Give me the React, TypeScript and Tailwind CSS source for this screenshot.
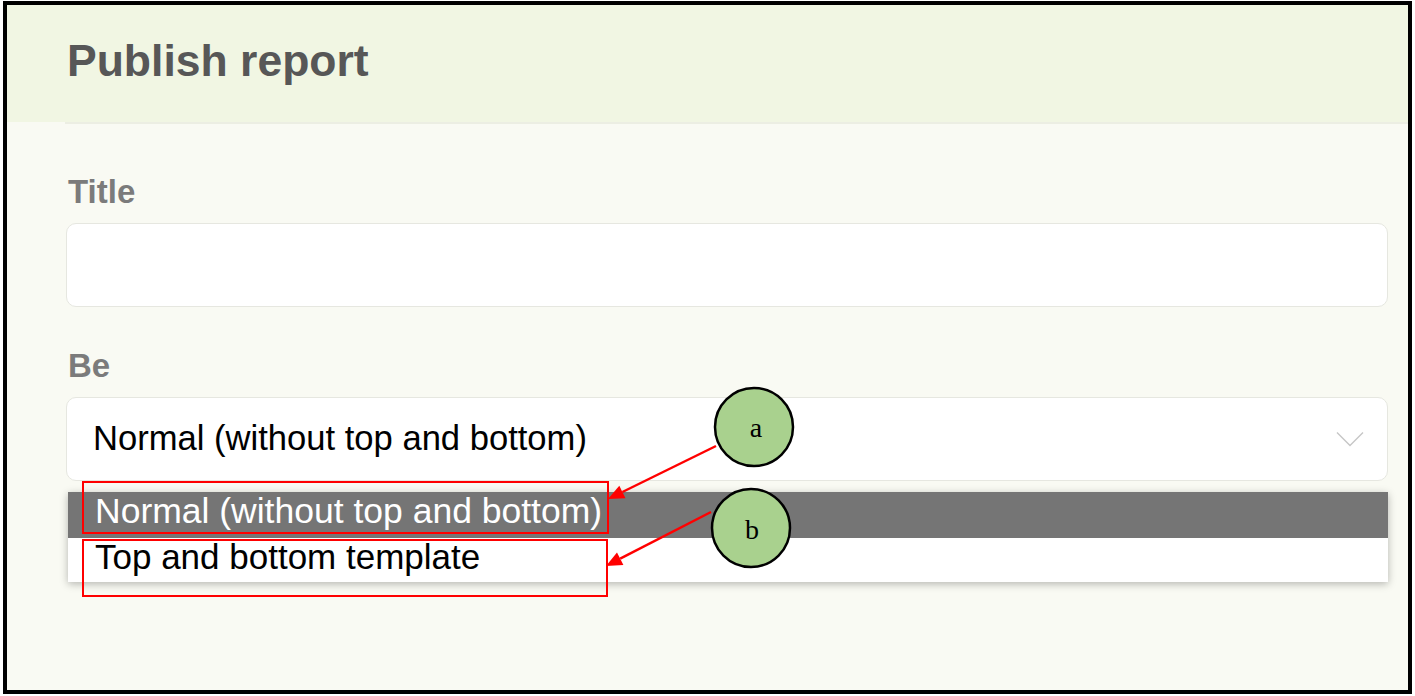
const options = ['Normal (without top and bottom)', 'Top and bottom template'];

export default function App() {
  return (
    <div className="relative h-[696px] w-[1415px] overflow-hidden bg-white font-['Liberation_Sans',Arial,sans-serif]">
      {/* outer frame */}
      <div className="ml-[3px] mt-px flex h-[693px] w-[1409px] flex-col border-4 border-black">
        {/* header */}
        <header className="h-[117px] shrink-0 bg-[#f1f6e3] pl-[60px] pt-[31px]">
          <h1 className="text-[44.5px] font-bold leading-[50px] text-[#575757]">
            Publish report
          </h1>
        </header>

        {/* body */}
        <div className="flex-1 bg-[#f9faf3] pl-[58px]">
          <div className="border-t-2 border-[#eceee3] pr-[20px] pt-[50px]">
            <label className="mb-[13px] ml-[3px] block text-[33px] font-bold leading-[36px] text-[#7b7b7b]">
              Title
            </label>
            <div className="ml-px h-[84px] rounded-[10px] border border-[#e6e7e0] bg-white" />

            <label className="mb-[13px] ml-[3px] mt-[41px] block text-[33px] font-bold leading-[36px] text-[#7b7b7b]">
              Be
            </label>
            <div className="relative ml-px">
              <div className="flex h-[84px] items-center justify-between rounded-[10px] border border-[#e6e7e0] bg-white pl-[26px] pr-[23px]">
                <span className="text-[34.6px] text-black">{options[0]}</span>
                <svg width="28" height="16" viewBox="0 0 28 16" fill="none">
                  <path d="M1 1.5 L14 14.5 L27 1.5" stroke="#c6c6c6" strokeWidth="1.4" />
                </svg>
              </div>

              {/* open menu */}
              <ul className="absolute left-[2px] right-0 top-[95px] bg-white shadow-[0_2px_8px_rgba(0,0,0,0.28)]">
                <li className="h-[46px] bg-[#757575] pl-[27px] text-[35.5px] leading-[38px] text-white">
                  {options[0]}
                </li>
                <li className="h-[44px] pl-[27px] text-[35px] leading-[37px] text-black">
                  {options[1]}
                </li>
              </ul>
            </div>
          </div>
        </div>
      </div>

      {/* annotations */}
      <div className="absolute left-[82px] top-[481px] h-[53px] w-[527px] border-[2.5px] border-[#ff0000]" />
      <div className="absolute left-[82px] top-[539px] h-[58px] w-[526px] border-[2.5px] border-[#ff0000]" />
      <svg className="pointer-events-none absolute left-0 top-0" width="1415" height="696">
        <line x1="716" y1="446" x2="622.4" y2="492" stroke="#ff0000" strokeWidth="2.5" />
        <polygon points="608,499 625.5,498.2 619.3,485.7" fill="#ff0000" />
        <line x1="711" y1="512" x2="620.2" y2="558.7" stroke="#ff0000" strokeWidth="2.5" />
        <polygon points="606,566 623.4,564.9 617,552.5" fill="#ff0000" />
        <circle cx="754" cy="427" r="39" fill="#a9d18e" stroke="#000" strokeWidth="2.5" />
        <circle cx="751" cy="528" r="39" fill="#a9d18e" stroke="#000" strokeWidth="2.5" />
        <text x="756" y="437" textAnchor="middle" fontFamily="'Liberation Serif', 'Times New Roman', serif" fontSize="28" fill="#000">
          a
        </text>
        <text x="752" y="539" textAnchor="middle" fontFamily="'Liberation Serif', 'Times New Roman', serif" fontSize="28" fill="#000">
          b
        </text>
      </svg>
    </div>
  );
}
